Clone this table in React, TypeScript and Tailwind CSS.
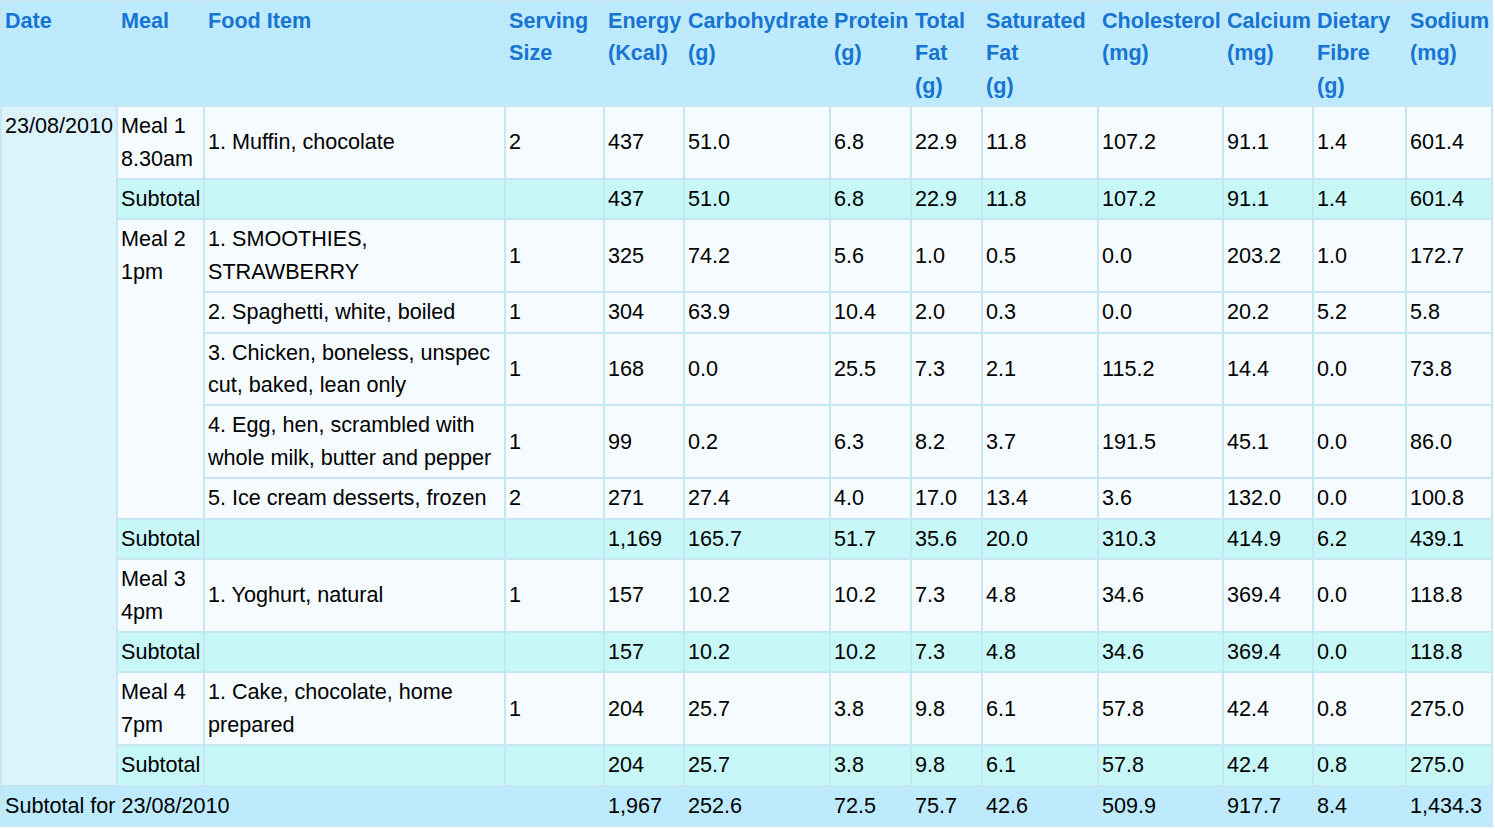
type Item = { food: string; serving: string; values: string[] };
type Meal = { label: string; time: string; items: Item[]; subtotal: string[] };

const headers = [
  { lines: ["Date"], w: "w-[114px]" },
  { lines: ["Meal"], w: "w-[85px]" },
  { lines: ["Food Item"], w: "w-[299px]" },
  { lines: ["Serving", "Size"], w: "w-[97px]" },
  { lines: ["Energy", "(Kcal)"], w: "w-[78px]" },
  { lines: ["Carbohydrate", "(g)"], w: "w-[144px]" },
  { lines: ["Protein", "(g)"], w: "w-[79px]" },
  { lines: ["Total", "Fat", "(g)"], w: "w-[69px]" },
  { lines: ["Saturated", "Fat", "(g)"], w: "w-[114px]" },
  { lines: ["Cholesterol", "(mg)"], w: "w-[123px]" },
  { lines: ["Calcium", "(mg)"], w: "w-[88px]" },
  { lines: ["Dietary", "Fibre", "(g)"], w: "w-[91px]" },
  { lines: ["Sodium", "(mg)"], w: "w-[84px]" },
];

const meals: Meal[] = [
  {
    label: "Meal 1",
    time: "8.30am",
    items: [
      {
        food: "1. Muffin, chocolate",
        serving: "2",
        values: ["437", "51.0", "6.8", "22.9", "11.8", "107.2", "91.1", "1.4", "601.4"],
      },
    ],
    subtotal: ["437", "51.0", "6.8", "22.9", "11.8", "107.2", "91.1", "1.4", "601.4"],
  },
  {
    label: "Meal 2",
    time: "1pm",
    items: [
      {
        food: "1. SMOOTHIES, STRAWBERRY",
        serving: "1",
        values: ["325", "74.2", "5.6", "1.0", "0.5", "0.0", "203.2", "1.0", "172.7"],
      },
      {
        food: "2. Spaghetti, white, boiled",
        serving: "1",
        values: ["304", "63.9", "10.4", "2.0", "0.3", "0.0", "20.2", "5.2", "5.8"],
      },
      {
        food: "3. Chicken, boneless, unspec cut, baked, lean only",
        serving: "1",
        values: ["168", "0.0", "25.5", "7.3", "2.1", "115.2", "14.4", "0.0", "73.8"],
      },
      {
        food: "4. Egg, hen, scrambled with whole milk, butter and pepper",
        serving: "1",
        values: ["99", "0.2", "6.3", "8.2", "3.7", "191.5", "45.1", "0.0", "86.0"],
      },
      {
        food: "5. Ice cream desserts, frozen",
        serving: "2",
        values: ["271", "27.4", "4.0", "17.0", "13.4", "3.6", "132.0", "0.0", "100.8"],
      },
    ],
    subtotal: ["1,169", "165.7", "51.7", "35.6", "20.0", "310.3", "414.9", "6.2", "439.1"],
  },
  {
    label: "Meal 3",
    time: "4pm",
    items: [
      {
        food: "1. Yoghurt, natural",
        serving: "1",
        values: ["157", "10.2", "10.2", "7.3", "4.8", "34.6", "369.4", "0.0", "118.8"],
      },
    ],
    subtotal: ["157", "10.2", "10.2", "7.3", "4.8", "34.6", "369.4", "0.0", "118.8"],
  },
  {
    label: "Meal 4",
    time: "7pm",
    items: [
      {
        food: "1. Cake, chocolate, home prepared",
        serving: "1",
        values: ["204", "25.7", "3.8", "9.8", "6.1", "57.8", "42.4", "0.8", "275.0"],
      },
    ],
    subtotal: ["204", "25.7", "3.8", "9.8", "6.1", "57.8", "42.4", "0.8", "275.0"],
  },
];

const dayTotal = ["1,967", "252.6", "72.5", "75.7", "42.6", "509.9", "917.7", "8.4", "1,434.3"];

const cell = "px-[3px] py-[3px] text-left";

export default function App() {
  const dateRows = meals.reduce((n, m) => n + m.items.length + 1, 0);

  return (
    <div
      className="bg-white text-black"
      style={{ fontFamily: '"Liberation Sans", Arial, sans-serif' }}
    >
      <table className="w-[1493px] table-fixed border-separate border-spacing-[2px] bg-[#c7e6f4] text-[21.6px] leading-[32.4px]">
        <thead>
          <tr className="bg-[#bdebfd]">
            {headers.map((h) => (
              <th key={h.lines.join(" ")} className={`${h.w} ${cell} align-top font-bold text-[#1874d2]`}>
                {h.lines.map((l, i) => (
                  <span key={i}>
                    {i > 0 && <br />}
                    {l}
                  </span>
                ))}
              </th>
            ))}
          </tr>
        </thead>
        <tbody>
          {meals.map((meal, mi) => (
            <>
              {meal.items.map((item, ii) => (
                <tr key={`${mi}-${ii}`} className="bg-[#f5fbfe]">
                  {mi === 0 && ii === 0 && (
                    <td rowSpan={dateRows} className={`${cell} bg-[#dcf3fc] align-top`}>
                      23/08/2010
                    </td>
                  )}
                  {ii === 0 && (
                    <td rowSpan={meal.items.length} className={`${cell} align-top`}>
                      {meal.label}
                      <br />
                      {meal.time}
                    </td>
                  )}
                  <td className={`${cell} align-middle`}>{item.food}</td>
                  <td className={`${cell} align-middle`}>{item.serving}</td>
                  {item.values.map((v, vi) => (
                    <td key={vi} className={`${cell} align-middle`}>
                      {v}
                    </td>
                  ))}
                </tr>
              ))}
              <tr key={`${mi}-sub`} className="bg-[#c8f7f7]">
                <td className={`${cell} align-middle`}>Subtotal</td>
                <td className={cell}></td>
                <td className={cell}></td>
                {meal.subtotal.map((v, vi) => (
                  <td key={vi} className={`${cell} align-middle`}>
                    {v}
                  </td>
                ))}
              </tr>
            </>
          ))}
          <tr className="bg-[#bdebfd]">
            <td colSpan={4} className={`${cell} align-middle`}>
              Subtotal for 23/08/2010
            </td>
            {dayTotal.map((v, vi) => (
              <td key={vi} className={`${cell} align-middle`}>
                {v}
              </td>
            ))}
          </tr>
        </tbody>
      </table>
    </div>
  );
}
